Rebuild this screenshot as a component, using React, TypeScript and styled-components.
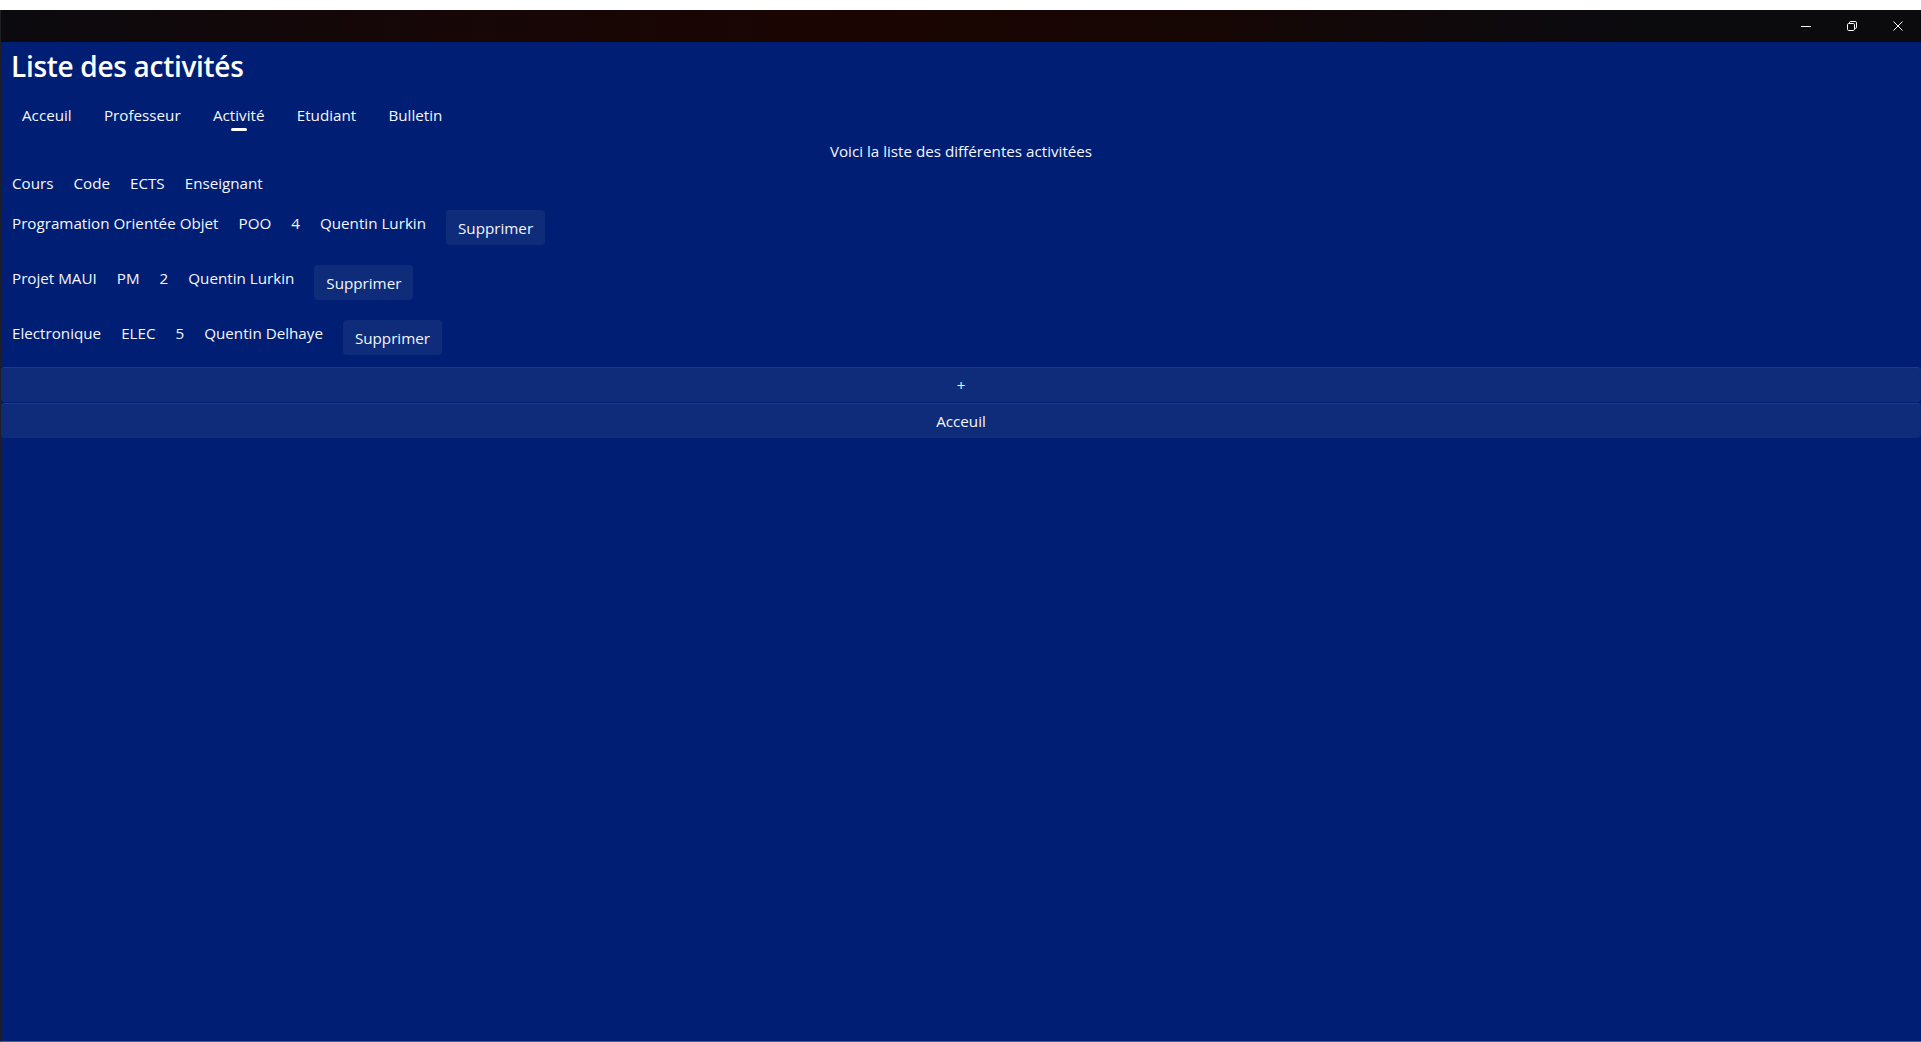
import React from "react";
import styled, { createGlobalStyle } from "styled-components";

const GlobalStyle = createGlobalStyle`
  html, body {
    margin: 0;
    padding: 0;
    background: #ffffff;
  }
  body {
    font-family: "Open Sans", "Noto Sans", "Liberation Sans", sans-serif;
    color: #f4f6fb;
  }
`;

const Screen = styled.div`
  display: flex;
  flex-direction: column;
  height: 1042px;
  padding-top: 10px;
  box-sizing: border-box;
`;

const Window = styled.div`
  flex: 1;
  display: flex;
  flex-direction: column;
  background: #001f74;
  border-left: 1px solid #1f1f24;
  border-bottom: 1px solid #5a5a5a;
`;

const TitleBar = styled.div`
  height: 32px;
  display: flex;
  justify-content: flex-end;
  background: linear-gradient(
    90deg,
    #0b0a0e 0%,
    #150708 18%,
    #1b0502 45%,
    #160604 62%,
    #0c0a0e 82%,
    #0b0a0d 100%
  );
`;

const CaptionButton = styled.div`
  width: 46px;
  height: 32px;
  display: flex;
  align-items: center;
  justify-content: center;
`;

const Content = styled.main`
  display: flex;
  flex-direction: column;
`;

const PageTitle = styled.h1`
  margin: 4px 0 0 10px;
  font-size: 28px;
  line-height: 40px;
  font-weight: 600;
  letter-spacing: -0.3px;
  color: #ffffff;
`;

const Tabs = styled.nav`
  display: flex;
  margin: 13px 0 0 5px;
  height: 42px;
`;

const Tab = styled.div<{ $active?: boolean }>`
  position: relative;
  padding: 6px 16.3px 0 16px;
  font-size: 15.2px;
  line-height: 20px;
  color: #f4f6fb;

  &::after {
    content: "";
    display: ${({ $active }) => ($active ? "block" : "none")};
    position: absolute;
    left: 50%;
    top: 29px;
    width: 16px;
    height: 3px;
    margin-left: -8px;
    border-radius: 2px;
    background: #ffffff;
  }
`;

const Subtitle = styled.p`
  margin: 0;
  text-align: center;
  font-size: 15.2px;
  line-height: 20px;
`;

const List = styled.div`
  display: flex;
  flex-direction: column;
  gap: 20px;
  margin: 12px 0 0 11px;
`;

const Row = styled.div<{ $header?: boolean }>`
  display: flex;
  align-items: flex-start;
  gap: 20px;
  margin-bottom: ${({ $header }) => ($header ? "-3px" : "0")};

  & > span {
    margin-top: ${({ $header }) => ($header ? "0" : "3px")};
  }
`;

const Cell = styled.span`
  font-size: 15.2px;
  line-height: 20px;
  white-space: nowrap;
`;

const DeleteButton = styled.button`
  height: 35px;
  padding: 0 12px;
  border: none;
  border-radius: 4px;
  background: #0e2c79;
  color: #f4f6fb;
  font-family: inherit;
  font-size: 15.2px;
  line-height: 20px;
`;

const BarButton = styled.button`
  display: block;
  width: 100%;
  height: 35px;
  margin: 0;
  border: none;
  border-top: 1px solid #1c3a88;
  border-radius: 4px;
  background: #0e2c7a;
  color: #f4f6fb;
  font-family: inherit;
  font-size: 15.2px;
  line-height: 20px;
`;

const Bars = styled.div`
  display: flex;
  flex-direction: column;
  gap: 1px;
  margin-top: 12px;
`;

const activities = [
  { name: "Programation Orientée Objet", code: "POO", ects: 4, teacher: "Quentin Lurkin" },
  { name: "Projet MAUI", code: "PM", ects: 2, teacher: "Quentin Lurkin" },
  { name: "Electronique", code: "ELEC", ects: 5, teacher: "Quentin Delhaye" },
];

const tabs = ["Acceuil", "Professeur", "Activité", "Etudiant", "Bulletin"];

export default function App() {
  return (
    <Screen>
      <GlobalStyle />
      <Window>
        <TitleBar>
          <CaptionButton>
            <svg width="10" height="10" viewBox="0 0 10 10">
              <path d="M0 5.5h10" stroke="#fff" strokeWidth="1" />
            </svg>
          </CaptionButton>
          <CaptionButton>
            <svg width="10" height="10" viewBox="0 0 10 10" fill="none">
              <rect x="0.5" y="2.5" width="7" height="7" rx="1.2" stroke="#fff" />
              <path d="M2.5 2.5V1.8A1.3 1.3 0 0 1 3.8 0.5H8.2A1.3 1.3 0 0 1 9.5 1.8V6.2A1.3 1.3 0 0 1 8.2 7.5H7.5" stroke="#fff" />
            </svg>
          </CaptionButton>
          <CaptionButton>
            <svg width="10" height="10" viewBox="0 0 10 10">
              <path d="M0.5 0.5l9 9M9.5 0.5l-9 9" stroke="#fff" strokeWidth="1" />
            </svg>
          </CaptionButton>
        </TitleBar>
        <Content>
          <PageTitle>Liste des activités</PageTitle>
          <Tabs>
            {tabs.map((t) => (
              <Tab key={t} $active={t === "Activité"}>
                {t}
              </Tab>
            ))}
          </Tabs>
          <Subtitle>Voici la liste des différentes activitées</Subtitle>
          <List>
            <Row $header>
              <Cell>Cours</Cell>
              <Cell>Code</Cell>
              <Cell>ECTS</Cell>
              <Cell>Enseignant</Cell>
            </Row>
            {activities.map((a) => (
              <Row key={a.code}>
                <Cell>{a.name}</Cell>
                <Cell>{a.code}</Cell>
                <Cell>{a.ects}</Cell>
                <Cell>{a.teacher}</Cell>
                <DeleteButton>Supprimer</DeleteButton>
              </Row>
            ))}
          </List>
          <Bars>
            <BarButton>+</BarButton>
            <BarButton>Acceuil</BarButton>
          </Bars>
        </Content>
      </Window>
    </Screen>
  );
}
